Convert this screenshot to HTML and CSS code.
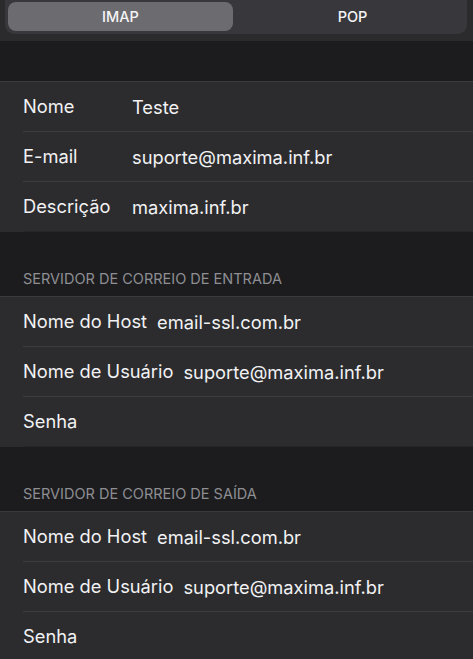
FILE: index.html
```html
<!DOCTYPE html>
<html lang="pt-BR">
<head>
  <meta charset="UTF-8" />
  <meta name="viewport" content="width=device-width, initial-scale=1.0" />
  <title>Conta</title>
  <link rel="stylesheet" href="styles.css">
</head>
<body>
  <div class="topbar">
    <div class="segmented">
      <div class="seg active">IMAP</div>
      <div class="seg">POP</div>
    </div>
  </div>

  <div class="gap"></div>

  <div class="group fixed">
    <div class="row"><span class="label">Nome</span><span class="value">Teste</span></div>
    <div class="row"><span class="label">E-mail</span><span class="value">suporte@maxima.inf.br</span></div>
    <div class="row"><span class="label">Descrição</span><span class="value">maxima.inf.br</span></div>
  </div>

  <div class="header">SERVIDOR DE CORREIO DE ENTRADA</div>
  <div class="group">
    <div class="row"><span class="label">Nome do Host</span><span class="value">email-ssl.com.br</span></div>
    <div class="row"><span class="label">Nome de Usuário</span><span class="value">suporte@maxima.inf.br</span></div>
    <div class="row"><span class="label">Senha</span></div>
  </div>

  <div class="header">SERVIDOR DE CORREIO DE SAÍDA</div>
  <div class="group">
    <div class="row"><span class="label">Nome do Host</span><span class="value">email-ssl.com.br</span></div>
    <div class="row"><span class="label">Nome de Usuário</span><span class="value">suporte@maxima.inf.br</span></div>
    <div class="row"><span class="label">Senha</span></div>
  </div>
</body>
</html>
```

FILE: styles.css
```css
body {
  margin: 0;
  background: #1c1c1e;
  color: #f2f2f4;
  font-family: Inter, "Liberation Sans", sans-serif;
  overflow: hidden;
}

.topbar {
  background: #2b2b2e;
  height: 41px;
}

.segmented {
  margin: 0 6px 0 5px;
  height: 34px;
  padding: 2px 3px 3px;
  box-sizing: border-box;
  background: #38383c;
  border-radius: 0 0 9px 9px;
  display: flex;
}

.seg {
  flex: 1;
  display: flex;
  justify-content: center;
  align-items: center;
  font-size: 14.5px;
  font-weight: 500;
  color: #f4f4f6;
  border-radius: 8px;
}

.seg.active {
  flex: none;
  width: 225px;
  background: #6c6b70;
}

.seg + .seg {
  padding-left: 8px;
}

.gap {
  height: 40px;
}

.group {
  background: #2c2c2e;
  border-top: 1px solid #3a3a3d;
}

.row {
  height: 50px;
  box-sizing: border-box;
  margin-left: 23px;
  display: flex;
  align-items: center;
  font-size: 18.3px;
  border-bottom: 1px solid #3d3d40;
}

.row:last-child {
  border-bottom-color: #252527;
}

.row .label {
  margin-right: 10px;
  margin-top: -2px;
}

.row .value {
  margin-top: 1px;
}

.fixed .label {
  width: 109px;
  margin-right: 0;
}

.header {
  padding: 38px 23px 9px;
  font-size: 14.5px;
  color: #8e8e93;
}
```
